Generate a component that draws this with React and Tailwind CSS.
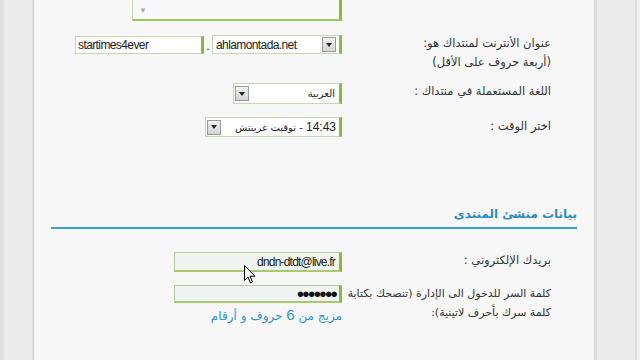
import React from "react";

const ar = { fontFamily: '"DejaVu Sans", "Noto Sans", sans-serif' };
const lt = { fontFamily: '"Liberation Sans", Arial, sans-serif' };

function DropBtn() {
  return (
    <div className="w-[14px] h-[15px] shrink-0 border border-[#9a9a9a] bg-gradient-to-b from-[#f2f2f2] to-[#d4d4d4] flex items-center justify-center">
      <span className="block w-0 h-0 border-l-[3px] border-r-[3px] border-t-[4px] border-l-transparent border-r-transparent border-t-[#222]" />
    </div>
  );
}

function Label({ children, className = "" }) {
  return (
    <div
      className={"w-[209px] shrink-0 text-right text-[11.5px] leading-[19px] text-[#333] " + className}
      style={ar}
    >
      {children}
    </div>
  );
}

export default function App() {
  return (
    <div className="w-[640px] h-[360px] overflow-hidden flex bg-[#e8e8e8]">
      {/* left strip */}
      <div className="w-[35px] shrink-0 flex">
        <div className="w-[4px] bg-[#e0e0e0]" />
        <div className="flex-1 bg-[#ebebeb]" />
        <div className="w-[2px] bg-[#d9d9d9]" />
        <div className="w-[1px] bg-[#f0f0f0]" />
      </div>

      {/* main panel */}
      <div className="relative w-[558px] shrink-0 bg-[#f7f7f7] flex flex-col pr-[42px]" dir="rtl">
        {/* textarea bottom */}
        <div className="flex">
          <Label />
          <div className="w-[210px] h-[21px] bg-[#f9f9f9] border-l border-l-[#c9d7b3] border-r-[3px] border-r-[#86bb3c] border-b-2 border-b-[#9cc45c] flex items-center justify-end pl-[6px]">
            <span className="text-[8px] text-[#aaa] leading-none">▼</span>
          </div>
        </div>

        {/* row 1 */}
        <div className="flex mt-[12px] h-[40px]">
          <Label className="pt-[1px]">
            عنوان الأنترنت لمنتداك هو:
            <br />
            (أربعة حروف على الأقل)
          </Label>
          <div className="flex items-start pt-[2px]">
            <div dir="ltr" className="w-[130px] h-[19px] bg-white border border-[#c7d5b0] border-r-[3px] border-r-[#86bb3c] flex items-center pl-[3px] pr-[3px]">
              <span className="flex-1 text-[12px] tracking-[-0.6px] text-[#222] leading-none" style={lt}>ahlamontada.net</span>
              <DropBtn />
            </div>
            <span className="w-[8px] text-center text-[12px] text-[#333] leading-[19px] pt-[2px]" style={lt}>.</span>
            <div dir="ltr" className="w-[129px] h-[18px] mt-[1px] bg-white border border-[#c7d5b0] border-r-[3px] border-r-[#86bb3c] flex items-center pl-[2px]">
              <span className="text-[12px] tracking-[-0.6px] text-[#222] leading-none" style={lt}>startimes4ever</span>
            </div>
          </div>
        </div>

        {/* row 2 */}
        <div className="flex mt-[9px] h-[22px]">
          <Label className="pt-[0px]">اللغة المستعملة في منتداك :</Label>
          <div className="pt-[1px]">
            <div className="w-[109px] h-[21px] bg-white border border-[#c7d5b0] border-r-[3px] border-r-[#86bb3c] flex items-center pr-[4px] pl-[1px]">
              <span className="flex-1 text-[10px] text-[#222] leading-none" style={ar}>العربية</span>
              <DropBtn />
            </div>
          </div>
        </div>

        {/* row 3 */}
        <div className="flex mt-[12px] h-[22px]">
          <Label className="pt-[1px]">اختر الوقت :</Label>
          <div className="pt-[1px]">
            <div className="w-[137px] h-[20px] bg-white border border-[#c7d5b0] border-r-[3px] border-r-[#86bb3c] flex items-center pr-[3px] pl-[1px]">
              <span className="flex-1 text-[10px] text-[#222] leading-none" style={ar}>
                <span style={lt} className="text-[12px] tracking-[-0.4px]">14:43</span> - توقيت غرينتش
              </span>
              <DropBtn />
            </div>
          </div>
        </div>

        {/* heading */}
        <div className="mt-[67px] -mr-[26px] ml-[16px]">
          <div className="text-right text-[12px] tracking-[-0.3px] font-bold text-[#2d8cc3] leading-[18px]" style={ar}>
            بيانات منشئ المنتدى
          </div>
          <div className="mt-[4px] h-[2px] bg-[#3aa0d2]" />
        </div>

        {/* email */}
        <div className="flex mt-[22px] h-[22px]">
          <Label className="pt-[0px]">بريدك الإلكتروني :</Label>
          <div className="pt-[1px]">
            <div dir="ltr" className="w-[168px] h-[20px] bg-[#eef4ef] border border-[#b9cc9c] border-r-[3px] border-r-[#86bb3c] border-b-2 border-b-[#a9c870] flex items-center justify-end pr-[4px]">
              <span className="text-[12px] tracking-[-0.8px] text-[#222] leading-none" style={lt}>dndn-dtdt@live.fr</span>
            </div>
          </div>
        </div>

        {/* password */}
        <div className="flex mt-[11px]">
          <Label className="pt-[0px] whitespace-nowrap text-[11px] tracking-[-0.3px]">
            كلمة السر للدخول الى الإدارة (تنصحك بكتابة
            <br />
            كلمة سرك بأحرف لاتينية):
          </Label>
          <div className="pt-[1px] flex flex-col items-start">
            <div dir="ltr" className="w-[168px] h-[18px] bg-[#eef4ef] border border-[#b9cc9c] border-r-[3px] border-r-[#86bb3c] border-b-2 border-b-[#a9c870] flex items-center justify-end pr-[3px]">
              <span className="text-[13px] text-[#111] leading-none tracking-[-2.2px]" style={lt}>●●●●●●●</span>
            </div>
            <div className="mt-[3px] text-[12px] tracking-[-0.2px] text-[#2f95cb] leading-[18px]" style={ar}>
              مزيج من <span style={lt} className="text-[15px]">6</span> حروف و أرقام
            </div>
          </div>
        </div>

        {/* mouse cursor */}
        <svg className="absolute left-[209px] top-[265px]" width="12" height="19" viewBox="0 0 12 19">
          <path d="M0.5 0.5 L0.5 15.5 L4 12 L6.5 18 L8.5 17 L6 11.2 L11 11.2 Z" fill="#fff" stroke="#000" strokeWidth="1" strokeLinejoin="round" />
        </svg>
      </div>

      {/* right strip */}
      <div className="flex-1 flex">
        <div className="w-[1px] bg-[#efefef]" />
        <div className="w-[3px] bg-[#dadada]" />
        <div className="flex-1 bg-[#ececec]" />
        <div className="w-[2px] bg-[#dedede]" />
        <div className="w-[3px] bg-[#f0f0f0]" />
      </div>
    </div>
  );
}
